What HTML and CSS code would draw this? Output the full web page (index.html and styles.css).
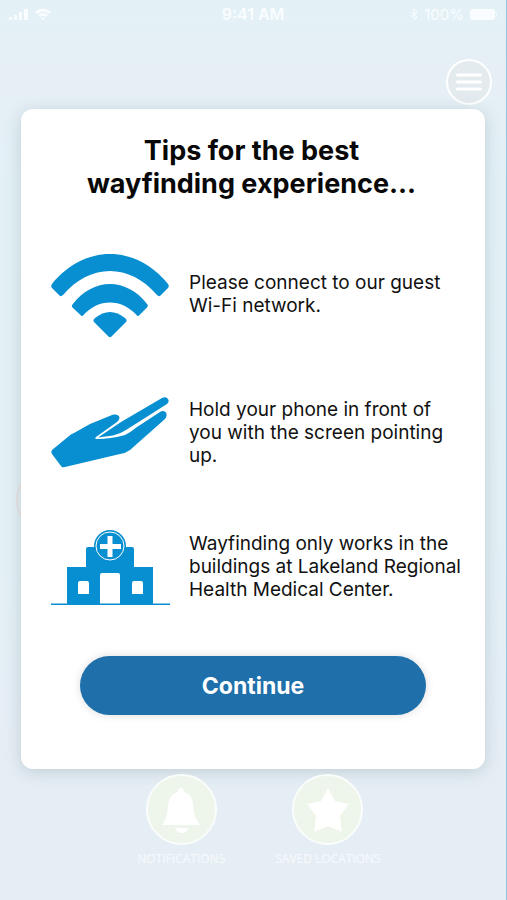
FILE: index.html
```html
<!DOCTYPE html>
<html lang="en">
<head>
<meta charset="utf-8">
<meta name="viewport" content="width=device-width, initial-scale=1">
<title>Wayfinding tips</title>
<link rel="stylesheet" href="styles.css">
</head>
<body>
<div class="screen">
  <header class="status">
    <div class="status-left">
      <svg width="21" height="13" viewBox="0 0 21 13" aria-hidden="true"><path d="M1 9h3v3H1zM6 7h3v5H6zM11 4h3v8h-3zM16 1h4v11h-4z"/></svg>
      <svg width="18" height="13" viewBox="0 0 18 13" aria-hidden="true"><path d="M1 4Q9-3 17 4l-2 2Q9 1 3 6zM4 7q5-4 10 0l-2 2q-3-2-6 0zM7 10q2-1 4 0l-2 2z"/></svg>
    </div>
    <span class="time">9:41 AM</span>
    <div class="status-right">
      <svg width="9" height="13" viewBox="0 0 9 13" aria-hidden="true"><path class="line" d="M1 4l6 5-3 3V1l3 3-6 5"/></svg>
      <span>100%</span>
      <svg width="29" height="13" viewBox="0 0 29 13" aria-hidden="true"><rect x="1" y="1" width="25" height="11" rx="3"/><path d="M27 4q2 2 0 5z"/></svg>
    </div>
  </header>
  <div class="toolbar">
    <button class="menu" type="button" aria-label="Menu">
      <svg width="26" height="18" viewBox="0 0 26 18" aria-hidden="true"><path d="M1.500 2h23M1.500 9h23M1.500 16h23"/></svg>
    </button>
  </div>
  <main class="stage">
    <span class="side-dot"></span>
    <section class="card" role="dialog" aria-labelledby="tips-title">
      <h1 id="tips-title">Tips for the best wayfinding experience...</h1>
      <ul class="tips">
        <li>
          <svg width="120" height="86" viewBox="0 0 120 86" aria-hidden="true">
            <path d="M2 32C34-8 86-8 118 32Q119.500 34 118 36L110.500 43.500Q109 45 107 43C80 11 40 11 13 43Q11 45 9.500 43.500L2 36Q.500 34 2 32Z"/>
            <path d="M22.500 52.500C43 25 77 25 97.500 52.500Q98.500 54 97 55.500L89 63.500Q88 64.500 87 63.500C72 46 48 46 33 63.500Q32 64.500 31 63.500L22.500 55.500Q21 54 22.500 52.500Z"/>
            <path d="M45 72Q60 60 75 72Q77.500 74 76 76L61.500 90.500Q60 92 58.500 90.500L44 76Q42.500 74 45 72Z" transform="translate(0 -6)"/>
          </svg>
          <p>Please connect to our guest Wi-Fi network.</p>
        </li>
        <li>
          <svg width="120" height="74" viewBox="0 1 120 74" aria-hidden="true">
            <path d="M2 54L19 40Q21 38 24 37L40 28L62 19C69 17 72 22 67 26L46 41Q44 43 47 43Q61 43 75 39Q81 36 87 31L110 16C115 13 119 18 115 23L80 54Q76 57 70 58L15 71Q12 72 11 70L2 58Q.500 56 2 54Z"/>
            <path d="M48 41.500L71 26L112 2C117-1 121 5 117 8L76 34Q70 38 63 39.500Z"/>
          </svg>
          <p>Hold your phone in front of you with the screen pointing up.</p>
        </li>
        <li>
          <svg width="120" height="76" viewBox="0 0 120 76" aria-hidden="true">
            <path fill-rule="evenodd" d="M1 73.500H17V37H36V19Q36 17 38 17H82Q84 17 84 19V37H103V73.500H120V75H1ZM28 53V64H39V53Q39 51 37 51H30Q28 51 28 53ZM50 45V73.500H70V45Q70 43 68 43H52Q50 43 50 45ZM82 53V64H93V53Q93 51 91 51H84Q82 51 82 53Z"/>
            <circle cx="60" cy="16" r="16"/>
            <circle class="ring" cx="60" cy="16" r="14"/>
            <path class="plus" d="M60 6V27M50 16.500H71"/>
          </svg>
          <p>Wayfinding only works in the buildings at Lakeland Regional Health Medical Center.</p>
        </li>
      </ul>
      <button class="continue" type="button">Continue</button>
    </section>
  </main>
  <nav class="shortcuts">
    <a href="#notifications">
      <span class="disc"><svg width="38" height="46" viewBox="0 0 38 46" aria-hidden="true"><path d="M16 3q3-4 6 0v2q9 2 9 13 0 11 7 20H0q6-9 6-20Q7 7 16 5zM13 41h13q-1 5-6 5-6 0-7-5z"/></svg></span>
      NOTIFICATIONS
    </a>
    <a href="#saved">
      <span class="disc"><svg width="42" height="44" viewBox="0 0 42 44" aria-hidden="true"><path d="M21 0l7 13 14 3-9 12 2 16-14-6-14 6 2-16L0 16l14-3z"/></svg></span>
      SAVED LOCATIONS
    </a>
  </nav>
</div>
</body>
</html>
```
FILE: styles.css
```css
* {
  box-sizing: border-box;
}

body {
  margin: 0;
  font-family: Inter, "Liberation Sans", sans-serif;
  color: #111;
}

.screen {
  display: flex;
  flex-direction: column;
  min-height: 100vh;
  border-right: 1px solid #8fc7e2;
  background: linear-gradient(#e3f1f6 0, #e6eff5 80px, #e3f1f6 180px, #e3f0f5 540px, #e6eef5 740px);
}

svg {
  display: block;
  flex: none;
}

.status {
  display: grid;
  grid-template-columns: 1fr auto 1fr;
  align-items: center;
  height: 28px;
  padding: 0 8px;
  color: #fafdff;
  font-size: 16px;
}

.status svg {
  fill: #fafdff;
}

.status .line {
  fill: none;
  stroke: #fafdff;
}

.status-left,
.status-right {
  display: flex;
  align-items: center;
  gap: 5px;
}

.status-right {
  justify-content: flex-end;
  font-size: 15px;
}

.time {
  font-weight: 600;
}

.toolbar {
  display: flex;
  justify-content: flex-end;
  padding: 31px 14px 4px;
}

.menu {
  display: grid;
  place-items: center;
  width: 46px;
  height: 46px;
  padding: 0;
  border: 2px solid #fff;
  border-radius: 50%;
  background: #e4ebef;
}

.menu svg {
  fill: none;
  stroke: #fff;
  stroke-width: 3;
  stroke-linecap: round;
}

.stage {
  position: relative;
  padding: 0 21px;
}

.side-dot {
  position: absolute;
  top: 356px;
  left: 16px;
  width: 70px;
  height: 70px;
  border: 2px solid #e8e2e0;
  border-radius: 50%;
}

.card {
  position: relative;
  display: flex;
  flex-direction: column;
  padding: 25px 14px 54px 29px;
  border-radius: 12px;
  background: #fff;
  box-shadow: 0 3px 16px rgba(120, 145, 155, 0.35);
}

h1 {
  max-width: 340px;
  margin: 0 auto;
  padding-right: 18px;
  box-sizing: content-box;
  color: #080808;
  font-size: 27px;
  line-height: 33px;
  font-weight: 700;
  text-align: center;
}

.tips {
  display: flex;
  flex-direction: column;
  gap: 59px;
  margin: 0;
  padding: 52px 0 0;
  list-style: none;
}

.tips li {
  display: flex;
  align-items: center;
  gap: 19px;
  padding-right: 7px;
}

.tips svg {
  fill: #088fd1;
}

.tips .ring {
  fill: none;
  stroke: #fff;
}

.tips .plus {
  stroke: #fff;
  stroke-width: 5;
}

.tips p {
  margin: 0;
  padding-bottom: 3px;
  font-size: 19px;
  line-height: 23px;
}

.continue {
  height: 59px;
  margin: 50px 45px 0 30px;
  border: 0;
  border-radius: 30px;
  background: #1f70aa;
  box-shadow: 0 0 8px rgba(80, 80, 80, 0.2);
  color: #fff;
  font: 700 23px Inter, "Liberation Sans", sans-serif;
}

.shortcuts {
  position: relative;
  display: flex;
  justify-content: center;
  gap: 50px;
  padding: 5px 0 24px 12px;
}

.shortcuts a {
  display: flex;
  flex-direction: column;
  align-items: center;
  gap: 6px;
  color: #f7fafc;
  font: 12px/16px "Open Sans", "Liberation Sans", sans-serif;
  text-decoration: none;
}

.disc {
  display: grid;
  place-items: center;
  width: 71px;
  height: 71px;
  border: 2px solid #fafdfb;
  border-radius: 50%;
  background: #eef5ea;
}

.disc svg {
  fill: #fff;
}
```
